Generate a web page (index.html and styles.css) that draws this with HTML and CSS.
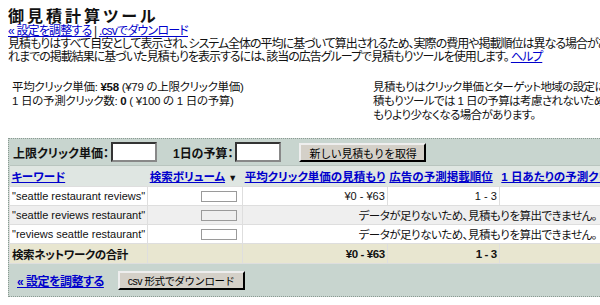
FILE: index.html
```html
<!DOCTYPE html>
<html lang="ja">
<head>
  <meta charset="UTF-8">
  <title>御見積計算ツール</title>
  <link rel="stylesheet" href="styles.css">
</head>
<body>
  <div class="page">
    <h1 class="title">御見積計算ツール</h1>
    <div class="links">
      <a href="#">« 設定を調整する</a> | <a href="#">.csvでダウンロード</a>
    </div>
    <p class="intro">
      見積もりはすべて目安として表示され、システム全体の平均に基づいて算出されるため、実際の費用や掲載順位は異なる場合があります。こ<br>
      れまでの掲載結果に基づいた見積もりを表示するには、該当の広告グループで見積もりツールを使用します。 <a href="#">ヘルプ</a>
    </p>

    <div class="summary">
      <div class="stats">
        平均クリック単価: <b>¥58</b> (¥79 の上限クリック単価)<br>
        1 日の予測クリック数: <b>0</b> ( ¥100 の 1 日の予算)
      </div>
      <div class="note">
        見積もりはクリック単価とターゲット地域の設定に基づいて算出されます。見<br>
        積もりツールでは 1 日の予算は考慮されないため、実際のクリック数は見積<br>
        もりより少なくなる場合があります。
      </div>
    </div>

    <div class="panel">
      <div class="controls">
        <label class="field">上限クリック単価：<input type="text" class="box"></label>
        <label class="field">1日の予算：<input type="text" class="box"></label>
        <button class="btn">新しい見積もりを取得</button>
      </div>

      <table class="results">
        <thead>
          <tr>
            <th class="c-kw"><a href="#">キーワード</a></th>
            <th class="c-vol"><a href="#">検索ボリューム</a> <span class="sort">▼</span></th>
            <th class="c-cpc"><a href="#">平均クリック単価の見積もり</a></th>
            <th class="c-pos"><a href="#">広告の予測掲載順位</a></th>
            <th class="c-day"><a href="#">1 日あたりの予測クリック数</a></th>
          </tr>
        </thead>
        <tbody>
          <tr>
            <td>"seattle restaurant reviews"</td>
            <td class="num"><span class="bar"></span></td>
            <td class="num">¥0 - ¥63</td>
            <td class="num">1 - 3</td>
            <td></td>
          </tr>
          <tr class="alt">
            <td>"seattle reviews restaurant"</td>
            <td class="num"><span class="bar"></span></td>
            <td class="msg" colspan="3">データが足りないため、見積もりを算出できません。</td>
          </tr>
          <tr>
            <td>"reviews seattle restaurant"</td>
            <td class="num"><span class="bar"></span></td>
            <td class="msg" colspan="3">データが足りないため、見積もりを算出できません。</td>
          </tr>
          <tr class="total">
            <td>検索ネットワークの合計</td>
            <td></td>
            <td class="num">¥0 - ¥63</td>
            <td class="num">1 - 3</td>
            <td></td>
          </tr>
        </tbody>
      </table>

      <div class="footer">
        <a href="#" class="back">« 設定を調整する</a>
        <button class="btn small">csv 形式でダウンロード</button>
      </div>
    </div>
  </div>
</body>
</html>
```
FILE: styles.css
```css
body {
  margin: 0;
  overflow: hidden;
  font-family: "Liberation Sans", "Noto Sans CJK JP", sans-serif;
  font-size: 12px;
  color: #111;
  background-color: #fff;
}

a {
  color: #0000cc;
}

.page {
  width: 720px;
  padding: 8px 0 0 8px;
  font-feature-settings: "palt";
}

.title {
  margin: 0;
  font-size: 16px;
  line-height: 17px;
  letter-spacing: 3px;
}

.links {
  line-height: 13px;
  letter-spacing: -0.8px;
}

.intro {
  margin: 0;
  line-height: 13px;
  letter-spacing: -1px;
  white-space: nowrap;
}

.summary {
  display: flex;
  margin-top: 16px;
  line-height: 14px;
  font-size: 11.5px;
  letter-spacing: -0.3px;
  white-space: nowrap;
}

.stats {
  width: 361px;
  padding-left: 4px;
}

.note {
  letter-spacing: -0.6px;
}

.panel {
  margin-top: 16px;
  background-color: #c8d5cf;
  border: 1px dotted #8a9a92;
  border-right: none;
}

.controls {
  display: flex;
  align-items: center;
  gap: 16px;
  height: 26px;
  padding-left: 4px;
  font-weight: bold;
}

.field {
  display: flex;
  align-items: center;
}

.box {
  width: 40px;
  height: 14px;
  margin: 0 0 0 2px;
  padding: 1px;
  border: 2px inset #888;
  background: #fff;
}

.btn {
  height: 19px;
  margin-left: 2px;
  padding: 0 8px;
  font-family: inherit;
  font-size: 11px;
  letter-spacing: -0.3px;
  background-color: #d4d0c8;
  border: 2px outset #eee;
  border-right-color: #555;
  border-bottom-color: #555;
}

.btn.small {
  margin-left: 0;
  font-size: 10.5px;
  letter-spacing: -0.5px;
}

.results {
  border-collapse: collapse;
  width: 100%;
  font-size: 11.5px;
}

.results th {
  text-align: left;
  padding: 2px 2px;
  height: 15px;
  background-color: #dfe6e2;
  border-top: 1px solid #b9c5bf;
  white-space: nowrap;
}

.results td {
  height: 18px;
  padding: 0 2px;
  font-size: 11px;
  background-color: #fff;
  border: 1px solid #dedede;
  white-space: nowrap;
}

.results .num {
  text-align: right;
}

.results .msg {
  text-align: right;
  padding-right: 130px;
  font-size: 11.5px;
  letter-spacing: -0.5px;
}

.sort {
  font-size: 9px;
}

.c-kw { width: 134px; }
.c-vol { width: 91px; }
.c-cpc { width: 140px; }
.c-pos { width: 108px; }

.bar {
  display: inline-block;
  width: 34px;
  height: 9px;
  margin-right: 3px;
  border: 1px solid #9a9a9a;
  vertical-align: middle;
}

.results .alt td {
  background-color: #efefef;
}

.results .total td {
  height: 19px;
  background-color: #e8e6d0;
  font-size: 11.5px;
  font-weight: bold;
  letter-spacing: -0.4px;
}

.footer {
  display: flex;
  align-items: center;
  gap: 14px;
  height: 32px;
  padding-left: 8px;
}

.back {
  font-weight: bold;
  letter-spacing: -0.5px;
}
```
